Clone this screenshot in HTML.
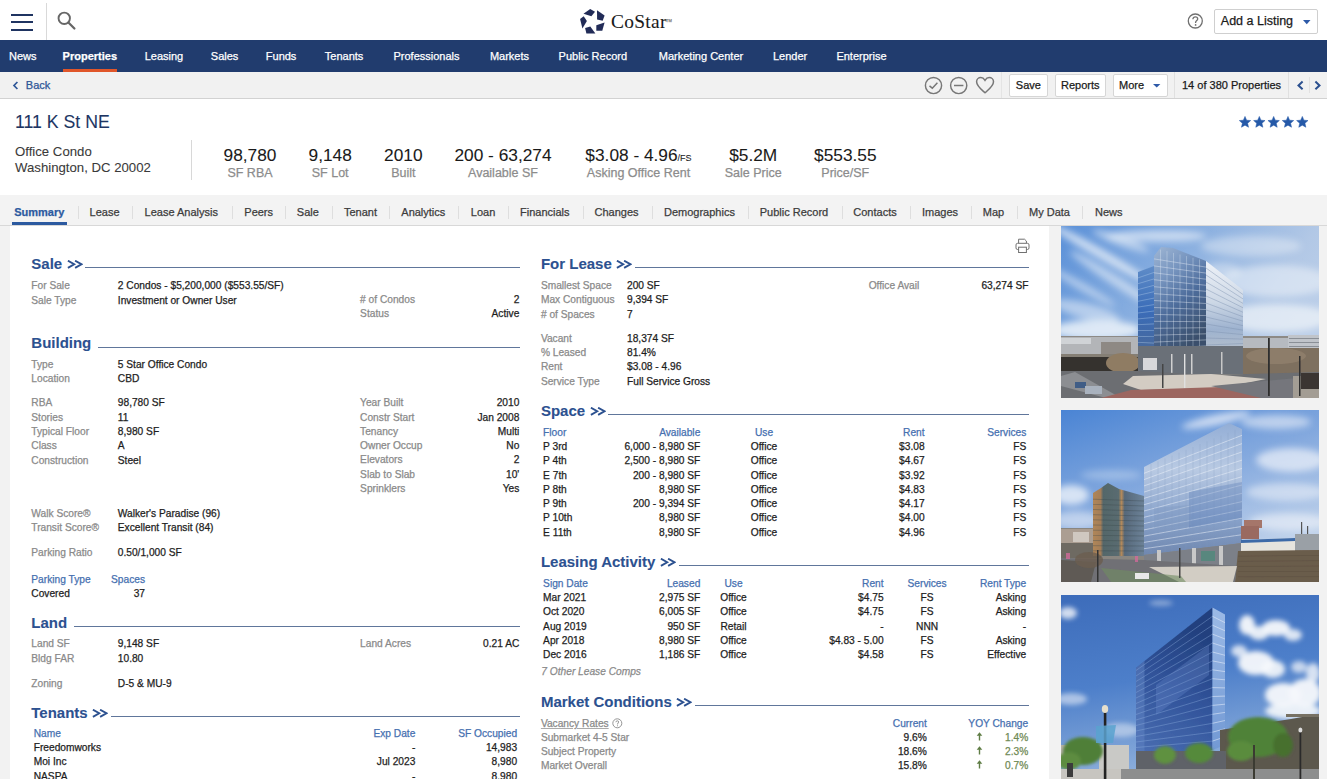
<!DOCTYPE html>
<html><head><meta charset="utf-8"><title>111 K St NE - CoStar</title>
<style>
html,body{margin:0;padding:0;width:1327px;height:779px;overflow:hidden;background:#fff;}
body{position:relative;font-family:"Liberation Sans",sans-serif;}
.t{position:absolute;white-space:nowrap;font-family:"Liberation Sans",sans-serif;-webkit-text-stroke:0.25px currentColor;}
</style></head><body>
<div style="position:absolute;left:0px;top:0px;width:1327px;height:40px;background:#fff"></div>
<div style="position:absolute;left:0px;top:40px;width:1327px;height:32px;background:#213c6e"></div>
<div style="position:absolute;left:0px;top:72px;width:1327px;height:26px;background:#f1f1f1"></div>
<div style="position:absolute;left:0px;top:98px;width:1327px;height:1px;background:#d2d2d2"></div>
<div style="position:absolute;left:0px;top:99px;width:1327px;height:96px;background:#fff"></div>
<div style="position:absolute;left:0px;top:195px;width:1327px;height:30px;background:#f3f3f3"></div>
<div style="position:absolute;left:0px;top:225px;width:1327px;height:1px;background:#d8d8d8"></div>
<div style="position:absolute;left:0px;top:226px;width:1327px;height:553px;background:#f2f2f2"></div>
<div style="position:absolute;left:10px;top:226px;width:1039px;height:553px;background:#fff"></div>
<div style="position:absolute;left:11px;top:14px;width:22px;height:2.2px;background:#1f3461"></div>
<div style="position:absolute;left:11px;top:21.3px;width:22px;height:2.2px;background:#1f3461"></div>
<div style="position:absolute;left:11px;top:28.6px;width:22px;height:2.2px;background:#1f3461"></div>
<div style="position:absolute;left:46px;top:3px;width:1px;height:37px;background:#d9d9d9"></div>
<svg style="position:absolute;left:55px;top:10px" width="24" height="24" viewBox="0 0 24 24"><circle cx="9.25" cy="8.3" r="5.7" fill="none" stroke="#666" stroke-width="1.9"/><line x1="13.4" y1="12.5" x2="19.4" y2="18.5" stroke="#666" stroke-width="2.3" stroke-linecap="round"/></svg>
<svg style="position:absolute;left:576px;top:6px" width="32" height="30" viewBox="0 0 32 30"><g fill="#222c58">
<polygon points="7.5,7.7 14.2,3.0 19.0,5.8 15.4,10.3"/>
<polygon points="21.0,4.3 28.6,9.6 26.7,14.7 21.1,13.6"/>
<polygon points="28.6,16.5 26.3,24.7 20.3,24.7 20.3,19.3"/>
<polygon points="9.1,22.1 14.3,20.5 19.4,27.6 10.4,27.4"/>
<polygon points="4.1,13.1 7.7,10.3 10.9,15.0 6.4,22.4"/>
</g></svg>
<div class="t" style="left:611.00px;top:12.00px;font-size:19.4px;line-height:19.4px;color:#1a1a1a;-webkit-text-stroke:0.08px currentColor;font-family:'Liberation Serif',serif;letter-spacing:0.3px;">CoStar</div>
<div class="t" style="left:666.00px;top:18.91px;font-size:4px;line-height:4px;color:#888;">TM</div>
<svg style="position:absolute;left:1187px;top:13px" width="17" height="17" viewBox="0 0 17 17"><circle cx="8.3" cy="8" r="7" fill="none" stroke="#707070" stroke-width="1.3"/><path d="M5.9 6.2 C5.9 4.6 7 3.9 8.3 3.9 C9.7 3.9 10.7 4.7 10.7 5.9 C10.7 7.3 8.6 7.6 8.6 9.3 L8.6 9.9" fill="none" stroke="#707070" stroke-width="1.3"/><circle cx="8.6" cy="11.9" r="0.85" fill="#707070"/></svg>
<div style="position:absolute;left:1213.5px;top:8.5px;width:104.5px;height:25px;background:#fff;border:1px solid #cfcfcf;border-radius:2px;box-sizing:border-box"></div>
<div class="t" style="left:1220.80px;top:15.00px;font-size:12.5px;line-height:12.5px;color:#1a1a1a;">Add a Listing</div>
<svg style="position:absolute;left:1303px;top:20px" width="8" height="5" viewBox="0 0 8 5"><polygon points="0,0 7.5,0 3.75,4.2" fill="#2d5aa8"/></svg>
<div class="t" style="left:9.00px;top:51.00px;font-size:11px;line-height:11px;color:#fff;">News</div>
<div class="t" style="left:62.60px;top:51.00px;font-size:11px;line-height:11px;color:#fff;font-weight:bold;">Properties</div>
<div class="t" style="left:144.70px;top:51.00px;font-size:11px;line-height:11px;color:#fff;">Leasing</div>
<div class="t" style="left:210.80px;top:51.00px;font-size:11px;line-height:11px;color:#fff;">Sales</div>
<div class="t" style="left:265.80px;top:51.00px;font-size:11px;line-height:11px;color:#fff;">Funds</div>
<div class="t" style="left:324.80px;top:51.00px;font-size:11px;line-height:11px;color:#fff;">Tenants</div>
<div class="t" style="left:393.50px;top:51.00px;font-size:11px;line-height:11px;color:#fff;">Professionals</div>
<div class="t" style="left:489.90px;top:51.00px;font-size:11px;line-height:11px;color:#fff;">Markets</div>
<div class="t" style="left:558.60px;top:51.00px;font-size:11px;line-height:11px;color:#fff;">Public Record</div>
<div class="t" style="left:658.80px;top:51.00px;font-size:11px;line-height:11px;color:#fff;">Marketing Center</div>
<div class="t" style="left:773.00px;top:51.00px;font-size:11px;line-height:11px;color:#fff;">Lender</div>
<div class="t" style="left:836.40px;top:51.00px;font-size:11px;line-height:11px;color:#fff;">Enterprise</div>
<div style="position:absolute;left:62.5px;top:69px;width:54.5px;height:3px;background:#e0562a"></div>
<svg style="position:absolute;left:12px;top:81px" width="8" height="9" viewBox="0 0 8 9"><polyline points="5.4,1 2,4.5 5.4,8" fill="none" stroke="#2d5597" stroke-width="1.7"/></svg>
<div class="t" style="left:25.80px;top:80.00px;font-size:11px;line-height:11px;color:#2d5597;">Back</div>
<svg style="position:absolute;left:924px;top:76px" width="20" height="20" viewBox="0 0 20 20"><circle cx="9.5" cy="9.5" r="8.1" fill="none" stroke="#777" stroke-width="1.45"/><polyline points="5.5,9.9 8.3,12.2 13.4,6.8" fill="none" stroke="#777" stroke-width="1.5"/></svg>
<svg style="position:absolute;left:949px;top:76px" width="20" height="20" viewBox="0 0 20 20"><circle cx="9.7" cy="9.5" r="8.1" fill="none" stroke="#777" stroke-width="1.45"/><line x1="5" y1="9.5" x2="14.4" y2="9.5" stroke="#777" stroke-width="1.5"/></svg>
<svg style="position:absolute;left:975px;top:76px" width="21" height="19" viewBox="0 0 21 19"><path d="M10 16.8 C6 13.2 1.6 10 1.6 5.8 C1.6 3.2 3.6 1.6 5.8 1.6 C7.6 1.6 9 2.7 10 4.3 C11 2.7 12.4 1.6 14.2 1.6 C16.5 1.6 18.5 3.2 18.5 5.8 C18.5 10 14 13.2 10 16.8 Z" fill="none" stroke="#777" stroke-width="1.5"/></svg>
<div style="position:absolute;left:1001px;top:72px;width:1px;height:26px;background:#e4e4e4"></div>
<div style="position:absolute;left:1009px;top:74px;width:39px;height:22.5px;background:#fff;border:1px solid #d6d6d6;border-radius:2px;box-sizing:border-box"></div>
<div class="t" style="left:1015.80px;top:80.00px;font-size:11px;line-height:11px;color:#1a1a1a;">Save</div>
<div style="position:absolute;left:1054.5px;top:74px;width:51px;height:22.5px;background:#fff;border:1px solid #d6d6d6;border-radius:2px;box-sizing:border-box"></div>
<div class="t" style="left:1061.00px;top:80.00px;font-size:11px;line-height:11px;color:#1a1a1a;">Reports</div>
<div style="position:absolute;left:1113px;top:74px;width:55px;height:22.5px;background:#fff;border:1px solid #d6d6d6;border-radius:2px;box-sizing:border-box"></div>
<div class="t" style="left:1119.00px;top:80.00px;font-size:11px;line-height:11px;color:#1a1a1a;">More</div>
<svg style="position:absolute;left:1153px;top:84px" width="8" height="5" viewBox="0 0 8 5"><polygon points="0,0 7.4,0 3.7,3.6" fill="#2d5aa8"/></svg>
<div style="position:absolute;left:1174px;top:72px;width:1px;height:26px;background:#e0e0e0"></div>
<div class="t" style="left:1182.00px;top:80.00px;font-size:11px;line-height:11px;color:#1a1a1a;">14 of 380 Properties</div>
<div style="position:absolute;left:1288px;top:72px;width:1px;height:26px;background:#e0e0e0"></div>
<div style="position:absolute;left:1309px;top:77px;width:1px;height:16px;background:#e2e2e2"></div>
<svg style="position:absolute;left:1296px;top:80px" width="9" height="11" viewBox="0 0 9 11"><polyline points="6.6,1.6 2.5,5.4 6.6,9.2" fill="none" stroke="#2b508f" stroke-width="2"/></svg>
<svg style="position:absolute;left:1313px;top:80px" width="9" height="11" viewBox="0 0 9 11"><polyline points="2.4,1.6 6.5,5.4 2.4,9.2" fill="none" stroke="#2b508f" stroke-width="2"/></svg>
<div class="t" style="left:15.00px;top:114.00px;font-size:17.7px;line-height:17.7px;color:#1d3563;-webkit-text-stroke:0.08px currentColor;">111 K St NE</div>
<div class="t" style="left:15.00px;top:145.00px;font-size:13.2px;line-height:13.2px;color:#3a3a3a;-webkit-text-stroke:0.08px currentColor;">Office Condo</div>
<div class="t" style="left:15.00px;top:161.00px;font-size:13.2px;line-height:13.2px;color:#3a3a3a;-webkit-text-stroke:0.08px currentColor;">Washington, DC 20002</div>
<div style="position:absolute;left:190.5px;top:140px;width:1px;height:40px;background:#d8d8d8"></div>
<div class="t" style="left:-50.00px;width:600px;text-align:center;top:147.00px;font-size:17.3px;line-height:17.3px;color:#1a1a1a;-webkit-text-stroke:0.08px currentColor;">98,780</div>
<div class="t" style="left:-50.00px;width:600px;text-align:center;top:167.00px;font-size:12.5px;line-height:12.5px;color:#8c8c8c;">SF RBA</div>
<div class="t" style="left:30.20px;width:600px;text-align:center;top:147.00px;font-size:17.3px;line-height:17.3px;color:#1a1a1a;-webkit-text-stroke:0.08px currentColor;">9,148</div>
<div class="t" style="left:30.20px;width:600px;text-align:center;top:167.00px;font-size:12.5px;line-height:12.5px;color:#8c8c8c;">SF Lot</div>
<div class="t" style="left:103.30px;width:600px;text-align:center;top:147.00px;font-size:17.3px;line-height:17.3px;color:#1a1a1a;-webkit-text-stroke:0.08px currentColor;">2010</div>
<div class="t" style="left:103.30px;width:600px;text-align:center;top:167.00px;font-size:12.5px;line-height:12.5px;color:#8c8c8c;">Built</div>
<div class="t" style="left:203.00px;width:600px;text-align:center;top:147.00px;font-size:17.3px;line-height:17.3px;color:#1a1a1a;-webkit-text-stroke:0.08px currentColor;">200 - 63,274</div>
<div class="t" style="left:203.00px;width:600px;text-align:center;top:167.00px;font-size:12.5px;line-height:12.5px;color:#8c8c8c;">Available SF</div>
<div class="t" style="left:338.50px;width:600px;text-align:center;top:147.00px;font-size:17.3px;line-height:17.3px;color:#1a1a1a;-webkit-text-stroke:0.08px currentColor;">$3.08 - 4.96<span style="font-size:9px">/FS</span></div>
<div class="t" style="left:338.50px;width:600px;text-align:center;top:167.00px;font-size:12.5px;line-height:12.5px;color:#8c8c8c;">Asking Office Rent</div>
<div class="t" style="left:453.20px;width:600px;text-align:center;top:147.00px;font-size:17.3px;line-height:17.3px;color:#1a1a1a;-webkit-text-stroke:0.08px currentColor;">$5.2M</div>
<div class="t" style="left:453.20px;width:600px;text-align:center;top:167.00px;font-size:12.5px;line-height:12.5px;color:#8c8c8c;">Sale Price</div>
<div class="t" style="left:545.30px;width:600px;text-align:center;top:147.00px;font-size:17.3px;line-height:17.3px;color:#1a1a1a;-webkit-text-stroke:0.08px currentColor;">$553.55</div>
<div class="t" style="left:545.30px;width:600px;text-align:center;top:167.00px;font-size:12.5px;line-height:12.5px;color:#8c8c8c;">Price/SF</div>
<svg style="position:absolute;left:1239.3px;top:115.6px" width="72" height="13" viewBox="0 0 72 13"><g transform="translate(0.00,0)"><polygon points="6.00,0.40 7.62,4.18 11.71,4.55 8.62,7.25 9.53,11.25 6.00,9.15 2.47,11.25 3.38,7.25 0.29,4.55 4.38,4.18" fill="#2559a8" stroke="#2559a8" stroke-width="0.5" stroke-linejoin="round"/></g><g transform="translate(14.33,0)"><polygon points="6.00,0.40 7.62,4.18 11.71,4.55 8.62,7.25 9.53,11.25 6.00,9.15 2.47,11.25 3.38,7.25 0.29,4.55 4.38,4.18" fill="#2559a8" stroke="#2559a8" stroke-width="0.5" stroke-linejoin="round"/></g><g transform="translate(28.66,0)"><polygon points="6.00,0.40 7.62,4.18 11.71,4.55 8.62,7.25 9.53,11.25 6.00,9.15 2.47,11.25 3.38,7.25 0.29,4.55 4.38,4.18" fill="#2559a8" stroke="#2559a8" stroke-width="0.5" stroke-linejoin="round"/></g><g transform="translate(42.99,0)"><polygon points="6.00,0.40 7.62,4.18 11.71,4.55 8.62,7.25 9.53,11.25 6.00,9.15 2.47,11.25 3.38,7.25 0.29,4.55 4.38,4.18" fill="#2559a8" stroke="#2559a8" stroke-width="0.5" stroke-linejoin="round"/></g><g transform="translate(57.32,0)"><polygon points="6.00,0.40 7.62,4.18 11.71,4.55 8.62,7.25 9.53,11.25 6.00,9.15 2.47,11.25 3.38,7.25 0.29,4.55 4.38,4.18" fill="#2559a8" stroke="#2559a8" stroke-width="0.5" stroke-linejoin="round"/></g></svg>
<div class="t" style="left:14.20px;top:207.00px;font-size:11px;line-height:11px;color:#2c5aa0;font-weight:bold;">Summary</div>
<div class="t" style="left:89.60px;top:207.00px;font-size:11px;line-height:11px;color:#3c3c3c;">Lease</div>
<div class="t" style="left:144.60px;top:207.00px;font-size:11px;line-height:11px;color:#3c3c3c;">Lease Analysis</div>
<div class="t" style="left:244.30px;top:207.00px;font-size:11px;line-height:11px;color:#3c3c3c;">Peers</div>
<div class="t" style="left:296.80px;top:207.00px;font-size:11px;line-height:11px;color:#3c3c3c;">Sale</div>
<div class="t" style="left:344.00px;top:207.00px;font-size:11px;line-height:11px;color:#3c3c3c;">Tenant</div>
<div class="t" style="left:401.30px;top:207.00px;font-size:11px;line-height:11px;color:#3c3c3c;">Analytics</div>
<div class="t" style="left:470.80px;top:207.00px;font-size:11px;line-height:11px;color:#3c3c3c;">Loan</div>
<div class="t" style="left:520.00px;top:207.00px;font-size:11px;line-height:11px;color:#3c3c3c;">Financials</div>
<div class="t" style="left:594.50px;top:207.00px;font-size:11px;line-height:11px;color:#3c3c3c;">Changes</div>
<div class="t" style="left:664.00px;top:207.00px;font-size:11px;line-height:11px;color:#3c3c3c;">Demographics</div>
<div class="t" style="left:759.70px;top:207.00px;font-size:11px;line-height:11px;color:#3c3c3c;">Public Record</div>
<div class="t" style="left:853.30px;top:207.00px;font-size:11px;line-height:11px;color:#3c3c3c;">Contacts</div>
<div class="t" style="left:922.00px;top:207.00px;font-size:11px;line-height:11px;color:#3c3c3c;">Images</div>
<div class="t" style="left:982.80px;top:207.00px;font-size:11px;line-height:11px;color:#3c3c3c;">Map</div>
<div class="t" style="left:1029.00px;top:207.00px;font-size:11px;line-height:11px;color:#3c3c3c;">My Data</div>
<div class="t" style="left:1095.00px;top:207.00px;font-size:11px;line-height:11px;color:#3c3c3c;">News</div>
<div style="position:absolute;left:77.5px;top:205.5px;width:1px;height:13px;background:#dedede"></div>
<div style="position:absolute;left:132.3px;top:205.5px;width:1px;height:13px;background:#dedede"></div>
<div style="position:absolute;left:232px;top:205.5px;width:1px;height:13px;background:#dedede"></div>
<div style="position:absolute;left:284.8px;top:205.5px;width:1px;height:13px;background:#dedede"></div>
<div style="position:absolute;left:331.6px;top:205.5px;width:1px;height:13px;background:#dedede"></div>
<div style="position:absolute;left:389.2px;top:205.5px;width:1px;height:13px;background:#dedede"></div>
<div style="position:absolute;left:458.4px;top:205.5px;width:1px;height:13px;background:#dedede"></div>
<div style="position:absolute;left:508px;top:205.5px;width:1px;height:13px;background:#dedede"></div>
<div style="position:absolute;left:582.5px;top:205.5px;width:1px;height:13px;background:#dedede"></div>
<div style="position:absolute;left:652px;top:205.5px;width:1px;height:13px;background:#dedede"></div>
<div style="position:absolute;left:748px;top:205.5px;width:1px;height:13px;background:#dedede"></div>
<div style="position:absolute;left:841.7px;top:205.5px;width:1px;height:13px;background:#dedede"></div>
<div style="position:absolute;left:910px;top:205.5px;width:1px;height:13px;background:#dedede"></div>
<div style="position:absolute;left:970.7px;top:205.5px;width:1px;height:13px;background:#dedede"></div>
<div style="position:absolute;left:1017.2px;top:205.5px;width:1px;height:13px;background:#dedede"></div>
<div style="position:absolute;left:1082.4px;top:205.5px;width:1px;height:13px;background:#dedede"></div>
<div style="position:absolute;left:12px;top:222px;width:55px;height:3.3px;background:#2c5aa0"></div>
<div class="t" style="left:31.30px;top:256.00px;font-size:15px;line-height:15px;color:#2c5190;font-weight:bold;-webkit-text-stroke:0.1px currentColor;">Sale<svg style="margin-left:4.6px;vertical-align:0px" width="16" height="8.6" viewBox="0 0 16 8.6"><polyline points="0.9,0.7 7.2,4.3 0.9,7.9" fill="none" stroke="#2c5190" stroke-width="1.9"/><polyline points="8.1,0.7 14.4,4.3 8.1,7.9" fill="none" stroke="#2c5190" stroke-width="1.9"/></svg></div>
<div style="position:absolute;left:85px;top:267px;width:435px;height:1px;background:#60769b"></div>
<div class="t" style="left:31.30px;top:281.00px;font-size:10.2px;line-height:10.2px;color:#8a8a8a;">For Sale</div>
<div class="t" style="left:117.80px;top:281.00px;font-size:10.2px;line-height:10.2px;color:#1e1e1e;">2 Condos - $5,200,000 ($553.55/SF)</div>
<div class="t" style="left:31.30px;top:296.00px;font-size:10.2px;line-height:10.2px;color:#8a8a8a;">Sale Type</div>
<div class="t" style="left:117.80px;top:296.00px;font-size:10.2px;line-height:10.2px;color:#1e1e1e;">Investment or Owner User</div>
<div class="t" style="left:360.10px;top:295.00px;font-size:10.2px;line-height:10.2px;color:#8a8a8a;"># of Condos</div>
<div class="t" style="right:807.70px;top:295.00px;font-size:10.2px;line-height:10.2px;color:#1e1e1e;">2</div>
<div class="t" style="left:360.10px;top:309.00px;font-size:10.2px;line-height:10.2px;color:#8a8a8a;">Status</div>
<div class="t" style="right:807.70px;top:309.00px;font-size:10.2px;line-height:10.2px;color:#1e1e1e;">Active</div>
<div class="t" style="left:31.30px;top:335.00px;font-size:15px;line-height:15px;color:#2c5190;font-weight:bold;-webkit-text-stroke:0.1px currentColor;">Building</div>
<div style="position:absolute;left:97.8px;top:347px;width:422.2px;height:1px;background:#60769b"></div>
<div class="t" style="left:31.30px;top:360.00px;font-size:10.2px;line-height:10.2px;color:#8a8a8a;">Type</div>
<div class="t" style="left:117.80px;top:360.00px;font-size:10.2px;line-height:10.2px;color:#1e1e1e;">5 Star Office Condo</div>
<div class="t" style="left:31.30px;top:374.00px;font-size:10.2px;line-height:10.2px;color:#8a8a8a;">Location</div>
<div class="t" style="left:117.80px;top:374.00px;font-size:10.2px;line-height:10.2px;color:#1e1e1e;">CBD</div>
<div class="t" style="left:31.30px;top:398.00px;font-size:10.2px;line-height:10.2px;color:#8a8a8a;">RBA</div>
<div class="t" style="left:117.80px;top:398.00px;font-size:10.2px;line-height:10.2px;color:#1e1e1e;">98,780 SF</div>
<div class="t" style="left:31.30px;top:413.00px;font-size:10.2px;line-height:10.2px;color:#8a8a8a;">Stories</div>
<div class="t" style="left:117.80px;top:413.00px;font-size:10.2px;line-height:10.2px;color:#1e1e1e;">11</div>
<div class="t" style="left:31.30px;top:427.00px;font-size:10.2px;line-height:10.2px;color:#8a8a8a;">Typical Floor</div>
<div class="t" style="left:117.80px;top:427.00px;font-size:10.2px;line-height:10.2px;color:#1e1e1e;">8,980 SF</div>
<div class="t" style="left:31.30px;top:441.00px;font-size:10.2px;line-height:10.2px;color:#8a8a8a;">Class</div>
<div class="t" style="left:117.80px;top:441.00px;font-size:10.2px;line-height:10.2px;color:#1e1e1e;">A</div>
<div class="t" style="left:31.30px;top:456.00px;font-size:10.2px;line-height:10.2px;color:#8a8a8a;">Construction</div>
<div class="t" style="left:117.80px;top:456.00px;font-size:10.2px;line-height:10.2px;color:#1e1e1e;">Steel</div>
<div class="t" style="left:31.30px;top:509.00px;font-size:10.2px;line-height:10.2px;color:#8a8a8a;">Walk Score&reg;</div>
<div class="t" style="left:117.80px;top:509.00px;font-size:10.2px;line-height:10.2px;color:#1e1e1e;">Walker's Paradise (96)</div>
<div class="t" style="left:31.30px;top:523.00px;font-size:10.2px;line-height:10.2px;color:#8a8a8a;">Transit Score&reg;</div>
<div class="t" style="left:117.80px;top:523.00px;font-size:10.2px;line-height:10.2px;color:#1e1e1e;">Excellent Transit (84)</div>
<div class="t" style="left:31.30px;top:548.00px;font-size:10.2px;line-height:10.2px;color:#8a8a8a;">Parking Ratio</div>
<div class="t" style="left:117.80px;top:548.00px;font-size:10.2px;line-height:10.2px;color:#1e1e1e;">0.50/1,000 SF</div>
<div class="t" style="left:360.10px;top:398.00px;font-size:10.2px;line-height:10.2px;color:#8a8a8a;">Year Built</div>
<div class="t" style="right:807.70px;top:398.00px;font-size:10.2px;line-height:10.2px;color:#1e1e1e;">2010</div>
<div class="t" style="left:360.10px;top:413.00px;font-size:10.2px;line-height:10.2px;color:#8a8a8a;">Constr Start</div>
<div class="t" style="right:807.70px;top:413.00px;font-size:10.2px;line-height:10.2px;color:#1e1e1e;">Jan 2008</div>
<div class="t" style="left:360.10px;top:427.00px;font-size:10.2px;line-height:10.2px;color:#8a8a8a;">Tenancy</div>
<div class="t" style="right:807.70px;top:427.00px;font-size:10.2px;line-height:10.2px;color:#1e1e1e;">Multi</div>
<div class="t" style="left:360.10px;top:441.00px;font-size:10.2px;line-height:10.2px;color:#8a8a8a;">Owner Occup</div>
<div class="t" style="right:807.70px;top:441.00px;font-size:10.2px;line-height:10.2px;color:#1e1e1e;">No</div>
<div class="t" style="left:360.10px;top:455.00px;font-size:10.2px;line-height:10.2px;color:#8a8a8a;">Elevators</div>
<div class="t" style="right:807.70px;top:455.00px;font-size:10.2px;line-height:10.2px;color:#1e1e1e;">2</div>
<div class="t" style="left:360.10px;top:470.00px;font-size:10.2px;line-height:10.2px;color:#8a8a8a;">Slab to Slab</div>
<div class="t" style="right:807.70px;top:470.00px;font-size:10.2px;line-height:10.2px;color:#1e1e1e;">10'</div>
<div class="t" style="left:360.10px;top:484.00px;font-size:10.2px;line-height:10.2px;color:#8a8a8a;">Sprinklers</div>
<div class="t" style="right:807.70px;top:484.00px;font-size:10.2px;line-height:10.2px;color:#1e1e1e;">Yes</div>
<div class="t" style="left:31.30px;top:575.00px;font-size:10.2px;line-height:10.2px;color:#4670b0;">Parking Type</div>
<div class="t" style="right:1182.00px;top:575.00px;font-size:10.2px;line-height:10.2px;color:#4670b0;">Spaces</div>
<div class="t" style="left:31.30px;top:589.00px;font-size:10.2px;line-height:10.2px;color:#1e1e1e;">Covered</div>
<div class="t" style="right:1182.00px;top:589.00px;font-size:10.2px;line-height:10.2px;color:#1e1e1e;">37</div>
<div class="t" style="left:31.30px;top:615.00px;font-size:15px;line-height:15px;color:#2c5190;font-weight:bold;-webkit-text-stroke:0.1px currentColor;">Land</div>
<div style="position:absolute;left:73.8px;top:626px;width:446.2px;height:1px;background:#60769b"></div>
<div class="t" style="left:31.30px;top:639.00px;font-size:10.2px;line-height:10.2px;color:#8a8a8a;">Land SF</div>
<div class="t" style="left:117.80px;top:639.00px;font-size:10.2px;line-height:10.2px;color:#1e1e1e;">9,148 SF</div>
<div class="t" style="left:31.30px;top:654.00px;font-size:10.2px;line-height:10.2px;color:#8a8a8a;">Bldg FAR</div>
<div class="t" style="left:117.80px;top:654.00px;font-size:10.2px;line-height:10.2px;color:#1e1e1e;">10.80</div>
<div class="t" style="left:31.30px;top:679.00px;font-size:10.2px;line-height:10.2px;color:#8a8a8a;">Zoning</div>
<div class="t" style="left:117.80px;top:679.00px;font-size:10.2px;line-height:10.2px;color:#1e1e1e;">D-5 &amp; MU-9</div>
<div class="t" style="left:360.10px;top:639.00px;font-size:10.2px;line-height:10.2px;color:#8a8a8a;">Land Acres</div>
<div class="t" style="right:807.70px;top:639.00px;font-size:10.2px;line-height:10.2px;color:#1e1e1e;">0.21 AC</div>
<div class="t" style="left:31.30px;top:705.00px;font-size:15px;line-height:15px;color:#2c5190;font-weight:bold;-webkit-text-stroke:0.1px currentColor;">Tenants<svg style="margin-left:4.6px;vertical-align:0px" width="16" height="8.6" viewBox="0 0 16 8.6"><polyline points="0.9,0.7 7.2,4.3 0.9,7.9" fill="none" stroke="#2c5190" stroke-width="1.9"/><polyline points="8.1,0.7 14.4,4.3 8.1,7.9" fill="none" stroke="#2c5190" stroke-width="1.9"/></svg></div>
<div style="position:absolute;left:111.4px;top:716px;width:408.6px;height:1px;background:#60769b"></div>
<div class="t" style="left:33.70px;top:729.00px;font-size:10.2px;line-height:10.2px;color:#4670b0;">Name</div>
<div class="t" style="right:911.70px;top:729.00px;font-size:10.2px;line-height:10.2px;color:#4670b0;">Exp Date</div>
<div class="t" style="right:809.90px;top:729.00px;font-size:10.2px;line-height:10.2px;color:#4670b0;">SF Occupied</div>
<div class="t" style="left:33.70px;top:743.00px;font-size:10.2px;line-height:10.2px;color:#1e1e1e;">Freedomworks</div>
<div class="t" style="right:911.70px;top:743.00px;font-size:10.2px;line-height:10.2px;color:#1e1e1e;">-</div>
<div class="t" style="right:809.90px;top:743.00px;font-size:10.2px;line-height:10.2px;color:#1e1e1e;">14,983</div>
<div class="t" style="left:33.70px;top:757.00px;font-size:10.2px;line-height:10.2px;color:#1e1e1e;">Moi Inc</div>
<div class="t" style="right:911.70px;top:757.00px;font-size:10.2px;line-height:10.2px;color:#1e1e1e;">Jul 2023</div>
<div class="t" style="right:809.90px;top:757.00px;font-size:10.2px;line-height:10.2px;color:#1e1e1e;">8,980</div>
<div class="t" style="left:33.70px;top:772.00px;font-size:10.2px;line-height:10.2px;color:#1e1e1e;">NASPA</div>
<div class="t" style="right:911.70px;top:772.00px;font-size:10.2px;line-height:10.2px;color:#1e1e1e;">-</div>
<div class="t" style="right:809.90px;top:772.00px;font-size:10.2px;line-height:10.2px;color:#1e1e1e;">8,980</div>
<div class="t" style="left:540.90px;top:256.00px;font-size:15px;line-height:15px;color:#2c5190;font-weight:bold;-webkit-text-stroke:0.1px currentColor;">For Lease<svg style="margin-left:4.6px;vertical-align:0px" width="16" height="8.6" viewBox="0 0 16 8.6"><polyline points="0.9,0.7 7.2,4.3 0.9,7.9" fill="none" stroke="#2c5190" stroke-width="1.9"/><polyline points="8.1,0.7 14.4,4.3 8.1,7.9" fill="none" stroke="#2c5190" stroke-width="1.9"/></svg></div>
<div style="position:absolute;left:634.7px;top:267px;width:394.29999999999995px;height:1px;background:#60769b"></div>
<div class="t" style="left:540.90px;top:281.00px;font-size:10.2px;line-height:10.2px;color:#8a8a8a;">Smallest Space</div>
<div class="t" style="left:627.00px;top:281.00px;font-size:10.2px;line-height:10.2px;color:#1e1e1e;">200 SF</div>
<div class="t" style="left:540.90px;top:295.00px;font-size:10.2px;line-height:10.2px;color:#8a8a8a;">Max Contiguous</div>
<div class="t" style="left:627.00px;top:295.00px;font-size:10.2px;line-height:10.2px;color:#1e1e1e;">9,394 SF</div>
<div class="t" style="left:540.90px;top:310.00px;font-size:10.2px;line-height:10.2px;color:#8a8a8a;"># of Spaces</div>
<div class="t" style="left:627.00px;top:310.00px;font-size:10.2px;line-height:10.2px;color:#1e1e1e;">7</div>
<div class="t" style="left:540.90px;top:334.00px;font-size:10.2px;line-height:10.2px;color:#8a8a8a;">Vacant</div>
<div class="t" style="left:627.00px;top:334.00px;font-size:10.2px;line-height:10.2px;color:#1e1e1e;">18,374 SF</div>
<div class="t" style="left:540.90px;top:348.00px;font-size:10.2px;line-height:10.2px;color:#8a8a8a;">% Leased</div>
<div class="t" style="left:627.00px;top:348.00px;font-size:10.2px;line-height:10.2px;color:#1e1e1e;">81.4%</div>
<div class="t" style="left:540.90px;top:362.00px;font-size:10.2px;line-height:10.2px;color:#8a8a8a;">Rent</div>
<div class="t" style="left:627.00px;top:362.00px;font-size:10.2px;line-height:10.2px;color:#1e1e1e;">$3.08 - 4.96</div>
<div class="t" style="left:540.90px;top:377.00px;font-size:10.2px;line-height:10.2px;color:#8a8a8a;">Service Type</div>
<div class="t" style="left:627.00px;top:377.00px;font-size:10.2px;line-height:10.2px;color:#1e1e1e;">Full Service Gross</div>
<div class="t" style="left:868.70px;top:281.00px;font-size:10.2px;line-height:10.2px;color:#8a8a8a;">Office Avail</div>
<div class="t" style="right:298.60px;top:281.00px;font-size:10.2px;line-height:10.2px;color:#1e1e1e;">63,274 SF</div>
<div class="t" style="left:540.90px;top:403.00px;font-size:15px;line-height:15px;color:#2c5190;font-weight:bold;-webkit-text-stroke:0.1px currentColor;">Space<svg style="margin-left:4.6px;vertical-align:0px" width="16" height="8.6" viewBox="0 0 16 8.6"><polyline points="0.9,0.7 7.2,4.3 0.9,7.9" fill="none" stroke="#2c5190" stroke-width="1.9"/><polyline points="8.1,0.7 14.4,4.3 8.1,7.9" fill="none" stroke="#2c5190" stroke-width="1.9"/></svg></div>
<div style="position:absolute;left:607.8px;top:414px;width:421.20000000000005px;height:1px;background:#60769b"></div>
<div class="t" style="left:543.10px;top:428.00px;font-size:10.2px;line-height:10.2px;color:#4670b0;">Floor</div>
<div class="t" style="right:626.70px;top:428.00px;font-size:10.2px;line-height:10.2px;color:#4670b0;">Available</div>
<div class="t" style="left:464.00px;width:600px;text-align:center;top:428.00px;font-size:10.2px;line-height:10.2px;color:#4670b0;">Use</div>
<div class="t" style="right:402.40px;top:428.00px;font-size:10.2px;line-height:10.2px;color:#4670b0;">Rent</div>
<div class="t" style="right:300.70px;top:428.00px;font-size:10.2px;line-height:10.2px;color:#4670b0;">Services</div>
<div class="t" style="left:543.10px;top:442.00px;font-size:10.2px;line-height:10.2px;color:#1e1e1e;">P 3rd</div>
<div class="t" style="right:626.70px;top:442.00px;font-size:10.2px;line-height:10.2px;color:#1e1e1e;">6,000 - 8,980 SF</div>
<div class="t" style="left:464.00px;width:600px;text-align:center;top:442.00px;font-size:10.2px;line-height:10.2px;color:#1e1e1e;">Office</div>
<div class="t" style="right:402.40px;top:442.00px;font-size:10.2px;line-height:10.2px;color:#1e1e1e;">$3.08</div>
<div class="t" style="right:300.70px;top:442.00px;font-size:10.2px;line-height:10.2px;color:#1e1e1e;">FS</div>
<div class="t" style="left:543.10px;top:456.00px;font-size:10.2px;line-height:10.2px;color:#1e1e1e;">P 4th</div>
<div class="t" style="right:626.70px;top:456.00px;font-size:10.2px;line-height:10.2px;color:#1e1e1e;">2,500 - 8,980 SF</div>
<div class="t" style="left:464.00px;width:600px;text-align:center;top:456.00px;font-size:10.2px;line-height:10.2px;color:#1e1e1e;">Office</div>
<div class="t" style="right:402.40px;top:456.00px;font-size:10.2px;line-height:10.2px;color:#1e1e1e;">$4.67</div>
<div class="t" style="right:300.70px;top:456.00px;font-size:10.2px;line-height:10.2px;color:#1e1e1e;">FS</div>
<div class="t" style="left:543.10px;top:471.00px;font-size:10.2px;line-height:10.2px;color:#1e1e1e;">E 7th</div>
<div class="t" style="right:626.70px;top:471.00px;font-size:10.2px;line-height:10.2px;color:#1e1e1e;">200 - 8,980 SF</div>
<div class="t" style="left:464.00px;width:600px;text-align:center;top:471.00px;font-size:10.2px;line-height:10.2px;color:#1e1e1e;">Office</div>
<div class="t" style="right:402.40px;top:471.00px;font-size:10.2px;line-height:10.2px;color:#1e1e1e;">$3.92</div>
<div class="t" style="right:300.70px;top:471.00px;font-size:10.2px;line-height:10.2px;color:#1e1e1e;">FS</div>
<div class="t" style="left:543.10px;top:485.00px;font-size:10.2px;line-height:10.2px;color:#1e1e1e;">P 8th</div>
<div class="t" style="right:626.70px;top:485.00px;font-size:10.2px;line-height:10.2px;color:#1e1e1e;">8,980 SF</div>
<div class="t" style="left:464.00px;width:600px;text-align:center;top:485.00px;font-size:10.2px;line-height:10.2px;color:#1e1e1e;">Office</div>
<div class="t" style="right:402.40px;top:485.00px;font-size:10.2px;line-height:10.2px;color:#1e1e1e;">$4.83</div>
<div class="t" style="right:300.70px;top:485.00px;font-size:10.2px;line-height:10.2px;color:#1e1e1e;">FS</div>
<div class="t" style="left:543.10px;top:499.00px;font-size:10.2px;line-height:10.2px;color:#1e1e1e;">P 9th</div>
<div class="t" style="right:626.70px;top:499.00px;font-size:10.2px;line-height:10.2px;color:#1e1e1e;">200 - 9,394 SF</div>
<div class="t" style="left:464.00px;width:600px;text-align:center;top:499.00px;font-size:10.2px;line-height:10.2px;color:#1e1e1e;">Office</div>
<div class="t" style="right:402.40px;top:499.00px;font-size:10.2px;line-height:10.2px;color:#1e1e1e;">$4.17</div>
<div class="t" style="right:300.70px;top:499.00px;font-size:10.2px;line-height:10.2px;color:#1e1e1e;">FS</div>
<div class="t" style="left:543.10px;top:513.00px;font-size:10.2px;line-height:10.2px;color:#1e1e1e;">P 10th</div>
<div class="t" style="right:626.70px;top:513.00px;font-size:10.2px;line-height:10.2px;color:#1e1e1e;">8,980 SF</div>
<div class="t" style="left:464.00px;width:600px;text-align:center;top:513.00px;font-size:10.2px;line-height:10.2px;color:#1e1e1e;">Office</div>
<div class="t" style="right:402.40px;top:513.00px;font-size:10.2px;line-height:10.2px;color:#1e1e1e;">$4.00</div>
<div class="t" style="right:300.70px;top:513.00px;font-size:10.2px;line-height:10.2px;color:#1e1e1e;">FS</div>
<div class="t" style="left:543.10px;top:528.00px;font-size:10.2px;line-height:10.2px;color:#1e1e1e;">E 11th</div>
<div class="t" style="right:626.70px;top:528.00px;font-size:10.2px;line-height:10.2px;color:#1e1e1e;">8,980 SF</div>
<div class="t" style="left:464.00px;width:600px;text-align:center;top:528.00px;font-size:10.2px;line-height:10.2px;color:#1e1e1e;">Office</div>
<div class="t" style="right:402.40px;top:528.00px;font-size:10.2px;line-height:10.2px;color:#1e1e1e;">$4.96</div>
<div class="t" style="right:300.70px;top:528.00px;font-size:10.2px;line-height:10.2px;color:#1e1e1e;">FS</div>
<div class="t" style="left:540.90px;top:554.00px;font-size:15px;line-height:15px;color:#2c5190;font-weight:bold;-webkit-text-stroke:0.1px currentColor;">Leasing Activity<svg style="margin-left:4.6px;vertical-align:0px" width="16" height="8.6" viewBox="0 0 16 8.6"><polyline points="0.9,0.7 7.2,4.3 0.9,7.9" fill="none" stroke="#2c5190" stroke-width="1.9"/><polyline points="8.1,0.7 14.4,4.3 8.1,7.9" fill="none" stroke="#2c5190" stroke-width="1.9"/></svg></div>
<div style="position:absolute;left:679.2px;top:565px;width:349.79999999999995px;height:1px;background:#60769b"></div>
<div class="t" style="left:543.10px;top:579.00px;font-size:10.2px;line-height:10.2px;color:#4670b0;">Sign Date</div>
<div class="t" style="right:626.70px;top:579.00px;font-size:10.2px;line-height:10.2px;color:#4670b0;">Leased</div>
<div class="t" style="left:433.50px;width:600px;text-align:center;top:579.00px;font-size:10.2px;line-height:10.2px;color:#4670b0;">Use</div>
<div class="t" style="right:443.40px;top:579.00px;font-size:10.2px;line-height:10.2px;color:#4670b0;">Rent</div>
<div class="t" style="left:627.10px;width:600px;text-align:center;top:579.00px;font-size:10.2px;line-height:10.2px;color:#4670b0;">Services</div>
<div class="t" style="right:300.80px;top:579.00px;font-size:10.2px;line-height:10.2px;color:#4670b0;">Rent Type</div>
<div class="t" style="left:543.10px;top:593.00px;font-size:10.2px;line-height:10.2px;color:#1e1e1e;">Mar 2021</div>
<div class="t" style="right:626.70px;top:593.00px;font-size:10.2px;line-height:10.2px;color:#1e1e1e;">2,975 SF</div>
<div class="t" style="left:433.50px;width:600px;text-align:center;top:593.00px;font-size:10.2px;line-height:10.2px;color:#1e1e1e;">Office</div>
<div class="t" style="right:443.40px;top:593.00px;font-size:10.2px;line-height:10.2px;color:#1e1e1e;">$4.75</div>
<div class="t" style="left:627.10px;width:600px;text-align:center;top:593.00px;font-size:10.2px;line-height:10.2px;color:#1e1e1e;">FS</div>
<div class="t" style="right:300.80px;top:593.00px;font-size:10.2px;line-height:10.2px;color:#1e1e1e;">Asking</div>
<div class="t" style="left:543.10px;top:607.00px;font-size:10.2px;line-height:10.2px;color:#1e1e1e;">Oct 2020</div>
<div class="t" style="right:626.70px;top:607.00px;font-size:10.2px;line-height:10.2px;color:#1e1e1e;">6,005 SF</div>
<div class="t" style="left:433.50px;width:600px;text-align:center;top:607.00px;font-size:10.2px;line-height:10.2px;color:#1e1e1e;">Office</div>
<div class="t" style="right:443.40px;top:607.00px;font-size:10.2px;line-height:10.2px;color:#1e1e1e;">$4.75</div>
<div class="t" style="left:627.10px;width:600px;text-align:center;top:607.00px;font-size:10.2px;line-height:10.2px;color:#1e1e1e;">FS</div>
<div class="t" style="right:300.80px;top:607.00px;font-size:10.2px;line-height:10.2px;color:#1e1e1e;">Asking</div>
<div class="t" style="left:543.10px;top:622.00px;font-size:10.2px;line-height:10.2px;color:#1e1e1e;">Aug 2019</div>
<div class="t" style="right:626.70px;top:622.00px;font-size:10.2px;line-height:10.2px;color:#1e1e1e;">950 SF</div>
<div class="t" style="left:433.50px;width:600px;text-align:center;top:622.00px;font-size:10.2px;line-height:10.2px;color:#1e1e1e;">Retail</div>
<div class="t" style="right:443.40px;top:622.00px;font-size:10.2px;line-height:10.2px;color:#1e1e1e;">-</div>
<div class="t" style="left:627.10px;width:600px;text-align:center;top:622.00px;font-size:10.2px;line-height:10.2px;color:#1e1e1e;">NNN</div>
<div class="t" style="right:300.80px;top:622.00px;font-size:10.2px;line-height:10.2px;color:#1e1e1e;">-</div>
<div class="t" style="left:543.10px;top:636.00px;font-size:10.2px;line-height:10.2px;color:#1e1e1e;">Apr 2018</div>
<div class="t" style="right:626.70px;top:636.00px;font-size:10.2px;line-height:10.2px;color:#1e1e1e;">8,980 SF</div>
<div class="t" style="left:433.50px;width:600px;text-align:center;top:636.00px;font-size:10.2px;line-height:10.2px;color:#1e1e1e;">Office</div>
<div class="t" style="right:443.40px;top:636.00px;font-size:10.2px;line-height:10.2px;color:#1e1e1e;">$4.83 - 5.00</div>
<div class="t" style="left:627.10px;width:600px;text-align:center;top:636.00px;font-size:10.2px;line-height:10.2px;color:#1e1e1e;">FS</div>
<div class="t" style="right:300.80px;top:636.00px;font-size:10.2px;line-height:10.2px;color:#1e1e1e;">Asking</div>
<div class="t" style="left:543.10px;top:650.00px;font-size:10.2px;line-height:10.2px;color:#1e1e1e;">Dec 2016</div>
<div class="t" style="right:626.70px;top:650.00px;font-size:10.2px;line-height:10.2px;color:#1e1e1e;">1,186 SF</div>
<div class="t" style="left:433.50px;width:600px;text-align:center;top:650.00px;font-size:10.2px;line-height:10.2px;color:#1e1e1e;">Office</div>
<div class="t" style="right:443.40px;top:650.00px;font-size:10.2px;line-height:10.2px;color:#1e1e1e;">$4.58</div>
<div class="t" style="left:627.10px;width:600px;text-align:center;top:650.00px;font-size:10.2px;line-height:10.2px;color:#1e1e1e;">FS</div>
<div class="t" style="right:300.80px;top:650.00px;font-size:10.2px;line-height:10.2px;color:#1e1e1e;">Effective</div>
<div class="t" style="left:541.30px;top:667.00px;font-size:10.2px;line-height:10.2px;color:#8a8a8a;font-style:italic;">7 Other Lease Comps</div>
<div class="t" style="left:540.90px;top:694.00px;font-size:15px;line-height:15px;color:#2c5190;font-weight:bold;-webkit-text-stroke:0.1px currentColor;">Market Conditions<svg style="margin-left:4.6px;vertical-align:0px" width="16" height="8.6" viewBox="0 0 16 8.6"><polyline points="0.9,0.7 7.2,4.3 0.9,7.9" fill="none" stroke="#2c5190" stroke-width="1.9"/><polyline points="8.1,0.7 14.4,4.3 8.1,7.9" fill="none" stroke="#2c5190" stroke-width="1.9"/></svg></div>
<div style="position:absolute;left:694.8px;top:705px;width:334.20000000000005px;height:1px;background:#60769b"></div>
<div class="t" style="left:540.90px;top:719.00px;font-size:10.2px;line-height:10.2px;color:#8a8a8a;text-decoration:underline;text-decoration-color:#aaa;">Vacancy Rates</div>
<svg style="position:absolute;left:611.5px;top:717.5px" width="11" height="11" viewBox="0 0 11 11"><circle cx="5.3" cy="5.3" r="4.5" fill="none" stroke="#8a8a8a" stroke-width="0.9"/><path d="M3.9 4.2 C3.9 3.3 4.5 2.8 5.3 2.8 C6.1 2.8 6.7 3.3 6.7 4 C6.7 4.9 5.5 5 5.5 6.1 L5.5 6.5" fill="none" stroke="#8a8a8a" stroke-width="0.9"/><circle cx="5.5" cy="7.8" r="0.55" fill="#8a8a8a"/></svg>
<div class="t" style="right:400.20px;top:719.00px;font-size:10.2px;line-height:10.2px;color:#4670b0;">Current</div>
<div class="t" style="right:298.80px;top:719.00px;font-size:10.2px;line-height:10.2px;color:#4670b0;">YOY Change</div>
<div class="t" style="left:540.90px;top:733.00px;font-size:10.2px;line-height:10.2px;color:#8a8a8a;">Submarket 4-5 Star</div>
<div class="t" style="right:400.20px;top:733.00px;font-size:10.2px;line-height:10.2px;color:#1e1e1e;">9.6%</div>
<div class="t" style="right:298.80px;top:733.00px;font-size:10.2px;line-height:10.2px;color:#6f8a55;">1.4%</div>
<svg style="position:absolute;left:976px;top:731.80px" width="7" height="9" viewBox="0 0 7 9"><polygon points="3.5,0.3 6.3,3.8 4.2,3.8 4.2,8.6 2.8,8.6 2.8,3.8 0.7,3.8" fill="#5f7d45"/></svg>
<div class="t" style="left:540.90px;top:747.00px;font-size:10.2px;line-height:10.2px;color:#8a8a8a;">Subject Property</div>
<div class="t" style="right:400.20px;top:747.00px;font-size:10.2px;line-height:10.2px;color:#1e1e1e;">18.6%</div>
<div class="t" style="right:298.80px;top:747.00px;font-size:10.2px;line-height:10.2px;color:#6f8a55;">2.3%</div>
<svg style="position:absolute;left:976px;top:746.05px" width="7" height="9" viewBox="0 0 7 9"><polygon points="3.5,0.3 6.3,3.8 4.2,3.8 4.2,8.6 2.8,8.6 2.8,3.8 0.7,3.8" fill="#5f7d45"/></svg>
<div class="t" style="left:540.90px;top:761.00px;font-size:10.2px;line-height:10.2px;color:#8a8a8a;">Market Overall</div>
<div class="t" style="right:400.20px;top:761.00px;font-size:10.2px;line-height:10.2px;color:#1e1e1e;">15.8%</div>
<div class="t" style="right:298.80px;top:761.00px;font-size:10.2px;line-height:10.2px;color:#6f8a55;">0.7%</div>
<svg style="position:absolute;left:976px;top:760.30px" width="7" height="9" viewBox="0 0 7 9"><polygon points="3.5,0.3 6.3,3.8 4.2,3.8 4.2,8.6 2.8,8.6 2.8,3.8 0.7,3.8" fill="#5f7d45"/></svg>
<svg style="position:absolute;left:1015px;top:238px" width="15" height="16" viewBox="0 0 15 16"><path d="M3.6 5 L3.6 1.2 L9.5 1.2 L11.4 3 L11.4 5" fill="none" stroke="#707070" stroke-width="1"/><rect x="1" y="5.3" width="13" height="6.2" rx="1.6" fill="none" stroke="#707070" stroke-width="1"/><rect x="3.6" y="9.2" width="7.8" height="5.3" fill="#fff" stroke="#707070" stroke-width="1"/></svg>
<svg style="position:absolute;left:1061px;top:226px" width="258" height="172" viewBox="0 0 258 172">
<defs>
<linearGradient id="s1" x1="0" y1="0" x2="1" y2="0.5"><stop offset="0" stop-color="#5a90d8"/><stop offset="0.45" stop-color="#8bb0e0"/><stop offset="0.8" stop-color="#b2c8e6"/><stop offset="1" stop-color="#bccfe9"/></linearGradient>
<linearGradient id="b1m" x1="0" y1="0" x2="0.4" y2="1"><stop offset="0" stop-color="#9fb6d4"/><stop offset="0.3" stop-color="#7896c0"/><stop offset="0.6" stop-color="#4e6d9c"/><stop offset="1" stop-color="#3b506c"/></linearGradient>
<linearGradient id="b1l" x1="0" y1="0" x2="0" y2="1"><stop offset="0" stop-color="#5f8cc8"/><stop offset="0.5" stop-color="#3a6cb8"/><stop offset="1" stop-color="#4a6a98"/></linearGradient>
<linearGradient id="b1r" x1="0" y1="0" x2="0" y2="1"><stop offset="0" stop-color="#eef2f8"/><stop offset="0.45" stop-color="#cdd8e6"/><stop offset="0.75" stop-color="#9db2cf"/><stop offset="1" stop-color="#b6c0cc"/></linearGradient>
<filter id="bl1" x="-30%" y="-30%" width="160%" height="160%"><feGaussianBlur stdDeviation="3.5"/></filter>
<filter id="bs1" x="-5%" y="-5%" width="110%" height="110%"><feGaussianBlur stdDeviation="0.5"/></filter>
</defs>
<rect width="258" height="172" fill="url(#s1)"/>
<g filter="url(#bl1)" fill="#f4f7fb">
<ellipse cx="40" cy="28" rx="60" ry="5" transform="rotate(30 40 28)" opacity="0.7"/>
<ellipse cx="55" cy="55" rx="55" ry="5" transform="rotate(33 55 55)" opacity="0.55"/>
<ellipse cx="20" cy="60" rx="40" ry="4" transform="rotate(30 20 60)" opacity="0.5"/>
<ellipse cx="95" cy="10" rx="50" ry="6" opacity="0.6"/>
<ellipse cx="60" cy="15" rx="30" ry="5" transform="rotate(20 60 15)" opacity="0.5"/>
<ellipse cx="25" cy="85" rx="35" ry="8" transform="rotate(15 25 85)" opacity="0.5"/>
<ellipse cx="35" cy="104" rx="45" ry="10" opacity="0.8"/>
<ellipse cx="215" cy="55" rx="55" ry="16" opacity="0.5"/>
<ellipse cx="215" cy="92" rx="55" ry="14" opacity="0.65"/>
<ellipse cx="190" cy="20" rx="50" ry="10" opacity="0.4"/>
<ellipse cx="160" cy="45" rx="20" ry="8" opacity="0.4"/>
</g>
<g filter="url(#bs1)">
<rect x="0" y="110" width="258" height="62" fill="#8d8a86"/>
<rect x="0" y="111" width="77" height="17" fill="#b3b5b8"/>
<rect x="0" y="112" width="30" height="6" fill="#d0d3d6"/>
<rect x="40" y="116" width="30" height="12" fill="#8e8984"/>
<rect x="182" y="112" width="45" height="12" fill="#b6bac0"/>
<rect x="227" y="109" width="31" height="15" fill="#c0c4ca"/>
<rect x="228" y="112" width="30" height="1" fill="#8a8f96"/><rect x="228" y="116" width="30" height="1" fill="#8a8f96"/><rect x="228" y="120" width="30" height="1" fill="#8a8f96"/>
<rect x="0" y="128" width="78" height="17" fill="#36332f"/>
<rect x="0" y="128" width="78" height="3" fill="#857f74"/>
<ellipse cx="62" cy="137" rx="17" ry="10" fill="#8f7c64"/>
<rect x="182" y="122" width="76" height="28" fill="#7e6f5e"/>
<ellipse cx="215" cy="130" rx="30" ry="8" fill="#8d7d6a"/>
<polygon points="77,46 93,40 93,130 77,128" fill="url(#b1l)"/>
<line x1="77" y1="51.9" x2="93" y2="46.4" stroke="#c0d6f0" stroke-width="0.6" opacity="0.6"/><line x1="77" y1="57.7" x2="93" y2="52.9" stroke="#c0d6f0" stroke-width="0.6" opacity="0.6"/><line x1="77" y1="63.6" x2="93" y2="59.3" stroke="#c0d6f0" stroke-width="0.6" opacity="0.6"/><line x1="77" y1="69.4" x2="93" y2="65.7" stroke="#c0d6f0" stroke-width="0.6" opacity="0.6"/><line x1="77" y1="75.3" x2="93" y2="72.1" stroke="#c0d6f0" stroke-width="0.6" opacity="0.6"/><line x1="77" y1="81.1" x2="93" y2="78.6" stroke="#c0d6f0" stroke-width="0.6" opacity="0.6"/><line x1="77" y1="87.0" x2="93" y2="85.0" stroke="#c0d6f0" stroke-width="0.6" opacity="0.6"/><line x1="77" y1="92.9" x2="93" y2="91.4" stroke="#c0d6f0" stroke-width="0.6" opacity="0.6"/><line x1="77" y1="98.7" x2="93" y2="97.9" stroke="#c0d6f0" stroke-width="0.6" opacity="0.6"/><line x1="77" y1="104.6" x2="93" y2="104.3" stroke="#c0d6f0" stroke-width="0.6" opacity="0.6"/><line x1="77" y1="110.4" x2="93" y2="110.7" stroke="#c0d6f0" stroke-width="0.6" opacity="0.6"/><line x1="77" y1="116.3" x2="93" y2="117.1" stroke="#c0d6f0" stroke-width="0.6" opacity="0.6"/><line x1="77" y1="122.1" x2="93" y2="123.6" stroke="#c0d6f0" stroke-width="0.6" opacity="0.6"/>
<polygon points="93,30 100,21 112,22 145,35 145,126 93,130" fill="url(#b1m)"/>
<line x1="99.5" y1="23.6" x2="99.5" y2="126" stroke="#e4ecf6" stroke-width="0.55" opacity="0.6"/><line x1="106.0" y1="25.2" x2="106.0" y2="126" stroke="#e4ecf6" stroke-width="0.55" opacity="0.6"/><line x1="112.5" y1="26.9" x2="112.5" y2="126" stroke="#e4ecf6" stroke-width="0.55" opacity="0.6"/><line x1="119.0" y1="28.5" x2="119.0" y2="126" stroke="#e4ecf6" stroke-width="0.55" opacity="0.6"/><line x1="125.5" y1="30.1" x2="125.5" y2="126" stroke="#e4ecf6" stroke-width="0.55" opacity="0.6"/><line x1="132.0" y1="31.8" x2="132.0" y2="126" stroke="#e4ecf6" stroke-width="0.55" opacity="0.6"/><line x1="138.5" y1="33.4" x2="138.5" y2="126" stroke="#e4ecf6" stroke-width="0.55" opacity="0.6"/><line x1="93" y1="32.9" x2="145" y2="41.1" stroke="#eef3fa" stroke-width="0.65" opacity="0.6"/><line x1="93" y1="39.9" x2="145" y2="47.1" stroke="#eef3fa" stroke-width="0.65" opacity="0.6"/><line x1="93" y1="46.8" x2="145" y2="53.2" stroke="#eef3fa" stroke-width="0.65" opacity="0.6"/><line x1="93" y1="53.7" x2="145" y2="59.3" stroke="#eef3fa" stroke-width="0.65" opacity="0.6"/><line x1="93" y1="60.7" x2="145" y2="65.3" stroke="#eef3fa" stroke-width="0.65" opacity="0.6"/><line x1="93" y1="67.6" x2="145" y2="71.4" stroke="#eef3fa" stroke-width="0.65" opacity="0.6"/><line x1="93" y1="74.5" x2="145" y2="77.5" stroke="#eef3fa" stroke-width="0.65" opacity="0.6"/><line x1="93" y1="81.5" x2="145" y2="83.5" stroke="#eef3fa" stroke-width="0.65" opacity="0.6"/><line x1="93" y1="88.4" x2="145" y2="89.6" stroke="#eef3fa" stroke-width="0.65" opacity="0.6"/><line x1="93" y1="95.3" x2="145" y2="95.7" stroke="#eef3fa" stroke-width="0.65" opacity="0.6"/><line x1="93" y1="102.3" x2="145" y2="101.7" stroke="#eef3fa" stroke-width="0.65" opacity="0.6"/><line x1="93" y1="109.2" x2="145" y2="107.8" stroke="#eef3fa" stroke-width="0.65" opacity="0.6"/><line x1="93" y1="116.1" x2="145" y2="113.9" stroke="#eef3fa" stroke-width="0.65" opacity="0.6"/><line x1="93" y1="123.1" x2="145" y2="119.9" stroke="#eef3fa" stroke-width="0.65" opacity="0.6"/>
<polygon points="145,35 182,64 182,122 145,126" fill="url(#b1r)"/>
<line x1="145" y1="42.0" x2="182" y2="68.5" stroke="#7d92b0" stroke-width="0.6" opacity="0.75"/><line x1="145" y1="49.0" x2="182" y2="72.9" stroke="#7d92b0" stroke-width="0.6" opacity="0.75"/><line x1="145" y1="56.0" x2="182" y2="77.4" stroke="#7d92b0" stroke-width="0.6" opacity="0.75"/><line x1="145" y1="63.0" x2="182" y2="81.8" stroke="#7d92b0" stroke-width="0.6" opacity="0.75"/><line x1="145" y1="70.0" x2="182" y2="86.3" stroke="#7d92b0" stroke-width="0.6" opacity="0.75"/><line x1="145" y1="77.0" x2="182" y2="90.8" stroke="#7d92b0" stroke-width="0.6" opacity="0.75"/><line x1="145" y1="84.0" x2="182" y2="95.2" stroke="#7d92b0" stroke-width="0.6" opacity="0.75"/><line x1="145" y1="91.0" x2="182" y2="99.7" stroke="#7d92b0" stroke-width="0.6" opacity="0.75"/><line x1="145" y1="98.0" x2="182" y2="104.2" stroke="#7d92b0" stroke-width="0.6" opacity="0.75"/><line x1="145" y1="105.0" x2="182" y2="108.6" stroke="#7d92b0" stroke-width="0.6" opacity="0.75"/><line x1="145" y1="112.0" x2="182" y2="113.1" stroke="#7d92b0" stroke-width="0.6" opacity="0.75"/><line x1="145" y1="119.0" x2="182" y2="117.5" stroke="#7d92b0" stroke-width="0.6" opacity="0.75"/>
<rect x="77" y="120" width="105" height="28" fill="#6a7078"/>
<rect x="82" y="132" width="14" height="12" fill="#d8d8da"/>
<rect x="110" y="128" width="1.5" height="20" fill="#d0d0d0"/><rect x="130" y="128" width="1.5" height="20" fill="#d0d0d0"/><rect x="160" y="126" width="1.5" height="22" fill="#c8c8c8"/>
<polygon points="0,145 78,145 150,149 258,146 258,172 0,172" fill="#6c6e72"/>
<polygon points="0,150 14,146 60,172 45,172 0,160" fill="#8c8e92"/>
<polygon points="72,150 150,148 205,153 160,162 80,164 62,158" fill="#d3ccc3"/>
<polygon points="40,172 70,164 160,161 215,166 220,172" fill="#9c6660"/>
<polygon points="150,160 258,150 258,172 200,172" fill="#74767c"/>
<rect x="14" y="156" width="11" height="6" fill="#3f5d86"/>
<rect x="24" y="160" width="17" height="8" fill="#a9b2be"/>
<rect x="232" y="150" width="26" height="22" fill="#a39d94"/>
<rect x="240" y="147" width="18" height="16" fill="#3b3631"/>
<rect x="207" y="112" width="1.8" height="58" fill="#2e2e2e"/>
<rect x="123" y="128" width="1.4" height="34" fill="#e0e0e0"/>
<rect x="101" y="138" width="1.5" height="24" fill="#444"/>
<rect x="238" y="130" width="1.5" height="40" fill="#2e2e2e"/>
</g>
</svg>
<svg style="position:absolute;left:1061px;top:410px" width="258" height="172" viewBox="0 0 258 172">
<defs>
<linearGradient id="s2" x1="0" y1="0" x2="0.5" y2="1"><stop offset="0" stop-color="#4a84d4"/><stop offset="0.5" stop-color="#84a9de"/><stop offset="1" stop-color="#c4d5ec"/></linearGradient>
<linearGradient id="b2" x1="0" y1="0" x2="0" y2="1"><stop offset="0" stop-color="#93aed6"/><stop offset="0.35" stop-color="#b9cae3"/><stop offset="0.7" stop-color="#8aa4cc"/><stop offset="1" stop-color="#7088b0"/></linearGradient>
<linearGradient id="b2o" x1="0" y1="0" x2="1" y2="0"><stop offset="0" stop-color="#b08658"/><stop offset="0.15" stop-color="#a47e58"/><stop offset="0.2" stop-color="#53666a"/><stop offset="0.5" stop-color="#5a6c70"/><stop offset="0.56" stop-color="#b4895a"/><stop offset="0.62" stop-color="#56687a"/><stop offset="1" stop-color="#6c8298"/></linearGradient>
<filter id="bl2" x="-30%" y="-30%" width="160%" height="160%"><feGaussianBlur stdDeviation="3.5"/></filter>
<filter id="bs2" x="-5%" y="-5%" width="110%" height="110%"><feGaussianBlur stdDeviation="0.5"/></filter>
</defs>
<rect width="258" height="172" fill="url(#s2)"/>
<g filter="url(#bl2)" fill="#f6f8fc">
<ellipse cx="155" cy="10" rx="35" ry="5" transform="rotate(-12 155 10)" opacity="0.7"/>
<ellipse cx="215" cy="12" rx="35" ry="7" opacity="0.55"/>
<ellipse cx="230" cy="50" rx="35" ry="12" opacity="0.65"/>
<ellipse cx="225" cy="82" rx="40" ry="9" opacity="0.5"/>
<ellipse cx="228" cy="112" rx="40" ry="9" opacity="0.55"/>
<ellipse cx="10" cy="85" rx="18" ry="10" opacity="0.75"/>
<ellipse cx="15" cy="110" rx="25" ry="9" opacity="0.5"/>
<ellipse cx="50" cy="65" rx="30" ry="5" opacity="0.3"/>
</g>
<g filter="url(#bs2)">
<rect x="0" y="118" width="180" height="54" fill="#8a8680"/><rect x="180" y="130" width="78" height="42" fill="#8a8680"/><rect x="183" y="110" width="18" height="8" fill="#a5766a"/><rect x="240" y="112" width="1.2" height="14" fill="#555"/><rect x="246" y="116" width="1.2" height="10" fill="#555"/>
<rect x="0" y="119" width="32" height="14" fill="#ab9e92"/>
<rect x="12" y="122" width="16" height="10" fill="#cfc8c0"/>
<rect x="0" y="133" width="40" height="15" fill="#6e6a62"/>
<polygon points="32,83 40,78 47,73 58,79 83,86 83,146 32,146" fill="url(#b2o)"/>
<line x1="32" y1="89.2" x2="83" y2="91.0" stroke="#384448" stroke-width="0.6" opacity="0.55"/><line x1="32" y1="94.3" x2="83" y2="96.0" stroke="#384448" stroke-width="0.6" opacity="0.55"/><line x1="32" y1="99.5" x2="83" y2="101.0" stroke="#384448" stroke-width="0.6" opacity="0.55"/><line x1="32" y1="104.7" x2="83" y2="106.0" stroke="#384448" stroke-width="0.6" opacity="0.55"/><line x1="32" y1="109.8" x2="83" y2="111.0" stroke="#384448" stroke-width="0.6" opacity="0.55"/><line x1="32" y1="115.0" x2="83" y2="116.0" stroke="#384448" stroke-width="0.6" opacity="0.55"/><line x1="32" y1="120.2" x2="83" y2="121.0" stroke="#384448" stroke-width="0.6" opacity="0.55"/><line x1="32" y1="125.3" x2="83" y2="126.0" stroke="#384448" stroke-width="0.6" opacity="0.55"/><line x1="32" y1="130.5" x2="83" y2="131.0" stroke="#384448" stroke-width="0.6" opacity="0.55"/><line x1="32" y1="135.7" x2="83" y2="136.0" stroke="#384448" stroke-width="0.6" opacity="0.55"/><line x1="32" y1="140.8" x2="83" y2="141.0" stroke="#384448" stroke-width="0.6" opacity="0.55"/>
<polygon points="83,57 168,13 181,19 181,133 83,145" fill="url(#b2)"/>
<line x1="83" y1="63.3" x2="181" y2="25.3" stroke="#eef3fa" stroke-width="0.8" opacity="0.65"/><line x1="83" y1="69.6" x2="181" y2="33.6" stroke="#eef3fa" stroke-width="0.8" opacity="0.65"/><line x1="83" y1="75.9" x2="181" y2="41.9" stroke="#eef3fa" stroke-width="0.8" opacity="0.65"/><line x1="83" y1="82.1" x2="181" y2="50.1" stroke="#eef3fa" stroke-width="0.8" opacity="0.65"/><line x1="83" y1="88.4" x2="181" y2="58.4" stroke="#eef3fa" stroke-width="0.8" opacity="0.65"/><line x1="83" y1="94.7" x2="181" y2="66.7" stroke="#eef3fa" stroke-width="0.8" opacity="0.65"/><line x1="83" y1="101.0" x2="181" y2="75.0" stroke="#eef3fa" stroke-width="0.8" opacity="0.65"/><line x1="83" y1="107.3" x2="181" y2="83.3" stroke="#eef3fa" stroke-width="0.8" opacity="0.65"/><line x1="83" y1="113.6" x2="181" y2="91.6" stroke="#eef3fa" stroke-width="0.8" opacity="0.65"/><line x1="83" y1="119.9" x2="181" y2="99.9" stroke="#eef3fa" stroke-width="0.8" opacity="0.65"/><line x1="83" y1="126.1" x2="181" y2="108.1" stroke="#eef3fa" stroke-width="0.8" opacity="0.65"/><line x1="83" y1="132.4" x2="181" y2="116.4" stroke="#eef3fa" stroke-width="0.8" opacity="0.65"/><line x1="83" y1="138.7" x2="181" y2="124.7" stroke="#eef3fa" stroke-width="0.8" opacity="0.65"/><line x1="90.0" y1="54.1" x2="90.0" y2="145" stroke="#7f97bb" stroke-width="0.5" opacity="0.5"/><line x1="97.0" y1="51.3" x2="97.0" y2="145" stroke="#7f97bb" stroke-width="0.5" opacity="0.5"/><line x1="104.0" y1="48.4" x2="104.0" y2="145" stroke="#7f97bb" stroke-width="0.5" opacity="0.5"/><line x1="111.0" y1="45.6" x2="111.0" y2="145" stroke="#7f97bb" stroke-width="0.5" opacity="0.5"/><line x1="118.0" y1="42.7" x2="118.0" y2="145" stroke="#7f97bb" stroke-width="0.5" opacity="0.5"/><line x1="125.0" y1="39.9" x2="125.0" y2="145" stroke="#7f97bb" stroke-width="0.5" opacity="0.5"/><line x1="132.0" y1="37.0" x2="132.0" y2="145" stroke="#7f97bb" stroke-width="0.5" opacity="0.5"/><line x1="139.0" y1="34.1" x2="139.0" y2="145" stroke="#7f97bb" stroke-width="0.5" opacity="0.5"/><line x1="146.0" y1="31.3" x2="146.0" y2="145" stroke="#7f97bb" stroke-width="0.5" opacity="0.5"/><line x1="153.0" y1="28.4" x2="153.0" y2="145" stroke="#7f97bb" stroke-width="0.5" opacity="0.5"/><line x1="160.0" y1="25.6" x2="160.0" y2="145" stroke="#7f97bb" stroke-width="0.5" opacity="0.5"/><line x1="167.0" y1="22.7" x2="167.0" y2="145" stroke="#7f97bb" stroke-width="0.5" opacity="0.5"/><line x1="174.0" y1="19.9" x2="174.0" y2="145" stroke="#7f97bb" stroke-width="0.5" opacity="0.5"/>
<polygon points="128,82 181,72 181,108 128,118" fill="#5d7fb8" opacity="0.35"/>
<polygon points="93,98 130,95 130,115 93,118" fill="#7e98c0" opacity="0.35"/>
<polygon points="83,145 181,133 181,158 83,158" fill="#7c8088"/>
<rect x="96" y="140" width="4" height="18" fill="#c8c8c8"/><rect x="131" y="138" width="4" height="20" fill="#c8c8c8"/><rect x="158" y="136" width="4" height="22" fill="#c8c8c8"/>
<rect x="140" y="141" width="14" height="10" fill="#4a8a7a" opacity="0.7"/>
<rect x="180" y="116" width="18" height="13" fill="#9a6a60"/>
<polygon points="180,130 234,128 234,142 180,142" fill="#e6e4de"/>
<polygon points="180,130 234,128 234,131 180,133" fill="#3d6aa8"/>
<rect x="234" y="124" width="24" height="16" fill="#9aa0a6"/>
<polygon points="177,141 258,140 258,172 174,172" fill="#6b5d4b"/>
<line x1="177" y1="146.2" x2="258" y2="145.3" stroke="#4f4436" stroke-width="0.6" opacity="0.5"/><line x1="177" y1="151.3" x2="258" y2="150.7" stroke="#4f4436" stroke-width="0.6" opacity="0.5"/><line x1="177" y1="156.5" x2="258" y2="156.0" stroke="#4f4436" stroke-width="0.6" opacity="0.5"/><line x1="177" y1="161.7" x2="258" y2="161.3" stroke="#4f4436" stroke-width="0.6" opacity="0.5"/><line x1="177" y1="166.8" x2="258" y2="166.7" stroke="#4f4436" stroke-width="0.6" opacity="0.5"/>
<polygon points="0,148 83,150 176,156 174,172 0,172" fill="#6f7074"/>
<polygon points="88,157 176,156 172,172 118,172" fill="#d2cdc4"/>
<polygon points="40,158 120,166 125,172 50,172" fill="#6f8c62" opacity="0.6"/>
<polygon points="0,150 35,152 30,172 0,172" fill="#5e5a54"/>
<ellipse cx="28" cy="150" rx="14" ry="8" fill="#6b5e50" opacity="0.8"/>
<rect x="74" y="163" width="14" height="6" fill="#e8e8e8"/>
<rect x="36" y="140" width="1.5" height="32" fill="#333"/>
<rect x="118" y="138" width="1.5" height="30" fill="#444"/>
<rect x="5" y="143" width="4" height="6" fill="#d06a9a" opacity="0.8"/>
<rect x="74" y="146" width="3" height="6" fill="#d06a9a" opacity="0.8"/>
</g>
</svg>
<svg style="position:absolute;left:1061px;top:594.5px" width="258" height="185" viewBox="0 0 258 185">
<defs>
<linearGradient id="s3" x1="0" y1="0" x2="0.2" y2="1"><stop offset="0" stop-color="#3d6cba"/><stop offset="0.5" stop-color="#4d7fca"/><stop offset="1" stop-color="#8fb0dc"/></linearGradient>
<linearGradient id="b3" x1="0.3" y1="0" x2="0" y2="1"><stop offset="0" stop-color="#22407e"/><stop offset="0.45" stop-color="#31539a"/><stop offset="1" stop-color="#4a6eb2"/></linearGradient>
<linearGradient id="b3r" x1="0" y1="0" x2="0" y2="1"><stop offset="0" stop-color="#9cbae6"/><stop offset="1" stop-color="#7299d4"/></linearGradient>
<filter id="bl3" x="-30%" y="-30%" width="160%" height="160%"><feGaussianBlur stdDeviation="2.6"/></filter>
<filter id="bs3" x="-5%" y="-5%" width="110%" height="110%"><feGaussianBlur stdDeviation="0.6"/></filter>
<filter id="bt3" x="-10%" y="-10%" width="120%" height="120%"><feGaussianBlur stdDeviation="1.4"/></filter>
</defs>
<rect width="258" height="185" fill="url(#s3)"/>
<g filter="url(#bl3)" fill="#f6f8fb">
<ellipse cx="186" cy="30" rx="8" ry="10" opacity="0.95"/>
<ellipse cx="198" cy="38" rx="10" ry="7" opacity="0.9"/>
<ellipse cx="215" cy="33" rx="14" ry="8" opacity="0.95"/>
<ellipse cx="232" cy="40" rx="9" ry="6" opacity="0.85"/>
<ellipse cx="178" cy="56" rx="8" ry="6" opacity="0.8"/>
<ellipse cx="195" cy="68" rx="18" ry="12" opacity="0.95"/>
<ellipse cx="212" cy="74" rx="12" ry="9" opacity="0.9"/>
<ellipse cx="238" cy="72" rx="8" ry="6" opacity="0.7"/>
<ellipse cx="252" cy="78" rx="7" ry="10" opacity="0.8"/>
<ellipse cx="222" cy="100" rx="18" ry="12" opacity="0.95"/>
<ellipse cx="244" cy="98" rx="16" ry="14" opacity="0.95"/>
<ellipse cx="232" cy="116" rx="28" ry="8" opacity="0.9"/>
<ellipse cx="7" cy="18" rx="9" ry="6" opacity="0.8"/>
<ellipse cx="10" cy="104" rx="16" ry="6" opacity="0.55"/>
<ellipse cx="60" cy="135" rx="18" ry="7" opacity="0.45"/>
<ellipse cx="100" cy="8" rx="12" ry="3" opacity="0.4"/>
</g>
<g filter="url(#bs3)">
<polygon points="75,73 83.5,66 151.5,12.4 151.5,155 75,158" fill="url(#b3)"/>
<polygon points="75,73 83.5,66 83.5,158 75,158" fill="#5b7fc0" opacity="0.6"/>
<line x1="75" y1="75.5" x2="151.5" y2="21.3" stroke="#8fb0e0" stroke-width="0.7" opacity="0.55"/><line x1="75" y1="81.0" x2="151.5" y2="30.2" stroke="#8fb0e0" stroke-width="0.7" opacity="0.55"/><line x1="75" y1="86.5" x2="151.5" y2="39.1" stroke="#8fb0e0" stroke-width="0.7" opacity="0.55"/><line x1="75" y1="92.0" x2="151.5" y2="48.0" stroke="#8fb0e0" stroke-width="0.7" opacity="0.55"/><line x1="75" y1="97.5" x2="151.5" y2="57.0" stroke="#8fb0e0" stroke-width="0.7" opacity="0.55"/><line x1="75" y1="103.0" x2="151.5" y2="65.9" stroke="#8fb0e0" stroke-width="0.7" opacity="0.55"/><line x1="75" y1="108.5" x2="151.5" y2="74.8" stroke="#8fb0e0" stroke-width="0.7" opacity="0.55"/><line x1="75" y1="114.0" x2="151.5" y2="83.7" stroke="#8fb0e0" stroke-width="0.7" opacity="0.55"/><line x1="75" y1="119.5" x2="151.5" y2="92.6" stroke="#8fb0e0" stroke-width="0.7" opacity="0.55"/><line x1="75" y1="125.0" x2="151.5" y2="101.5" stroke="#8fb0e0" stroke-width="0.7" opacity="0.55"/><line x1="75" y1="130.5" x2="151.5" y2="110.4" stroke="#8fb0e0" stroke-width="0.7" opacity="0.55"/><line x1="75" y1="136.0" x2="151.5" y2="119.3" stroke="#8fb0e0" stroke-width="0.7" opacity="0.55"/><line x1="75" y1="141.5" x2="151.5" y2="128.3" stroke="#8fb0e0" stroke-width="0.7" opacity="0.55"/><line x1="75" y1="147.0" x2="151.5" y2="137.2" stroke="#8fb0e0" stroke-width="0.7" opacity="0.55"/><line x1="75" y1="152.5" x2="151.5" y2="146.1" stroke="#8fb0e0" stroke-width="0.7" opacity="0.55"/>
<polygon points="95,90 148,50 148,80 95,120" fill="#6c90d0" opacity="0.3"/>
<polygon points="151.5,12.4 164,19.5 164,150 151.5,155" fill="url(#b3r)"/>
<line x1="151.5" y1="21.3" x2="164" y2="27.7" stroke="#e6eefa" stroke-width="0.7" opacity="0.8"/><line x1="151.5" y1="30.2" x2="164" y2="35.8" stroke="#e6eefa" stroke-width="0.7" opacity="0.8"/><line x1="151.5" y1="39.1" x2="164" y2="44.0" stroke="#e6eefa" stroke-width="0.7" opacity="0.8"/><line x1="151.5" y1="48.0" x2="164" y2="52.1" stroke="#e6eefa" stroke-width="0.7" opacity="0.8"/><line x1="151.5" y1="57.0" x2="164" y2="60.3" stroke="#e6eefa" stroke-width="0.7" opacity="0.8"/><line x1="151.5" y1="65.9" x2="164" y2="68.4" stroke="#e6eefa" stroke-width="0.7" opacity="0.8"/><line x1="151.5" y1="74.8" x2="164" y2="76.6" stroke="#e6eefa" stroke-width="0.7" opacity="0.8"/><line x1="151.5" y1="83.7" x2="164" y2="84.8" stroke="#e6eefa" stroke-width="0.7" opacity="0.8"/><line x1="151.5" y1="92.6" x2="164" y2="92.9" stroke="#e6eefa" stroke-width="0.7" opacity="0.8"/><line x1="151.5" y1="101.5" x2="164" y2="101.1" stroke="#e6eefa" stroke-width="0.7" opacity="0.8"/><line x1="151.5" y1="110.4" x2="164" y2="109.2" stroke="#e6eefa" stroke-width="0.7" opacity="0.8"/><line x1="151.5" y1="119.3" x2="164" y2="117.4" stroke="#e6eefa" stroke-width="0.7" opacity="0.8"/><line x1="151.5" y1="128.3" x2="164" y2="125.5" stroke="#e6eefa" stroke-width="0.7" opacity="0.8"/><line x1="151.5" y1="137.2" x2="164" y2="133.7" stroke="#e6eefa" stroke-width="0.7" opacity="0.8"/><line x1="151.5" y1="146.1" x2="164" y2="141.8" stroke="#e6eefa" stroke-width="0.7" opacity="0.8"/>
<rect x="38" y="150" width="30" height="24" fill="#c9c9c6"/>
<rect x="0" y="150" width="12" height="15" fill="#b8b2aa"/>
<polygon points="159,135 230,124 258,119 258,185 159,185" fill="#5b584e"/>
<rect x="225" y="119" width="33" height="3" fill="#777164"/>
<rect x="75" y="156" width="90" height="18" fill="#5e6268"/>
</g>
<g filter="url(#bt3)">
<ellipse cx="22" cy="156" rx="20" ry="14" fill="#4f7f38"/>
<ellipse cx="8" cy="166" rx="12" ry="9" fill="#5d8c40"/>
<ellipse cx="104" cy="160" rx="11" ry="9" fill="#5f913f"/>
<ellipse cx="138" cy="158" rx="14" ry="10" fill="#548a3a"/>
<ellipse cx="197" cy="142" rx="30" ry="20" fill="#4f8238"/>
<ellipse cx="180" cy="156" rx="14" ry="10" fill="#5a8c3e"/>
<ellipse cx="222" cy="150" rx="10" ry="12" fill="#46702f"/>
</g>
<g filter="url(#bs3)">
<rect x="0" y="174" width="258" height="11" fill="#8d8e8e"/>
<rect x="0" y="174" width="60" height="11" fill="#c7c5c0"/>
<rect x="42.8" y="115" width="2.6" height="70" fill="#222"/>
<ellipse cx="44" cy="114" rx="3.2" ry="4" fill="#e6dfcc"/>
<polygon points="35,131 55,130 52,148 35,148" fill="#5aa2cf" opacity="0.85"/>
<rect x="238.5" y="137" width="1.8" height="48" fill="#2a2a2a"/>
<ellipse cx="239.4" cy="135" rx="2" ry="2.5" fill="#ddd"/>
<rect x="192" y="150" width="2" height="35" fill="#3b3a30"/>
<rect x="6" y="168" width="6" height="14" fill="#3a3a3a"/>
</g>
</svg>
</body></html>
